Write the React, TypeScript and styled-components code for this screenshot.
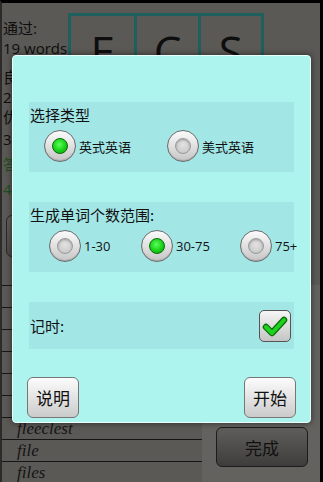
import React from "react";
import styled, { createGlobalStyle } from "styled-components";

const GlobalStyle = createGlobalStyle`
	html, body {
		margin: 0;
		padding: 0;
		background: #000;
	}
	body {
		font-family: "Open Sans", "Noto Sans CJK SC", sans-serif;
	}
`;

const Screen = styled.div`
	position: relative;
	width: 323px;
	height: 482px;
	box-sizing: border-box;
	border-top: 3px solid #000;
	border-right: 3px solid #000;
	border-left: 2px solid #2c2b29;
	background: #5a5955;
	overflow: hidden;
	display: flex;
	flex-direction: column;
	color: #0e0e0e;
`;

const Upper = styled.div`
	height: 282px;
	display: flex;
	flex-shrink: 0;
`;

const Stats = styled.div`
	width: 65px;
	display: flex;
	flex-direction: column;
	font-size: 15px;
	line-height: 20px;
	white-space: nowrap;
	padding-left: 1px;
`;

const StatLine = styled.div<{ $space: number; $green?: boolean }>`
	margin-top: ${(p) => p.$space}px;
	color: ${(p) => (p.$green ? "#1f4f1f" : "#0e0e0e")};
`;

const GhostButton = styled.div`
	margin-top: 16px;
	margin-left: 3px;
	width: 110px;
	height: 42px;
	box-sizing: border-box;
	border: 1px solid #262624;
	border-radius: 6px;
	background: linear-gradient(#605f5b, #4c4b48);
`;

const LetterGrid = styled.div`
	margin-top: 10px;
	width: 196px;
	height: 76px;
	box-sizing: border-box;
	border: 3px solid #1d605d;
	display: grid;
	grid-template-columns: 1fr 1fr 1fr;
`;

const LetterCell = styled.div<{ $divider?: boolean }>`
	border-left: ${(p) => (p.$divider ? "3px solid #1d605d" : "none")};
	font-size: 44px;
	line-height: 70px;
	text-align: center;
	color: #0e0e0e;
`;

const Lower = styled.div`
	flex: 1;
	display: flex;
	min-height: 0;
`;

const WordList = styled.div`
	width: 200px;
	border-top: 1px solid #161616;
	display: flex;
	flex-direction: column;
`;

const WordRow = styled.div`
	height: 21px;
	flex-shrink: 0;
	border-bottom: 1px solid #161616;
	padding-left: 15px;
	font-family: "Liberation Serif", serif;
	font-style: italic;
	font-size: 17px;
	line-height: 21px;
	color: #151515;
`;

const SidePanel = styled.div`
	flex: 1;
	background: #63625e;
	display: flex;
	align-items: flex-end;
	padding: 0 12px 15px 14px;
`;

const DoneButton = styled.div`
	width: 92px;
	height: 40px;
	box-sizing: border-box;
	border: 1px solid #1c1c1c;
	border-radius: 6px;
	background: linear-gradient(#5f5e5b, #3e3d3b);
	display: flex;
	align-items: center;
	justify-content: center;
	font-family: "Noto Sans CJK SC", sans-serif;
	font-size: 17px;
	color: #111;
`;

const Dialog = styled.div`
	position: absolute;
	left: 10px;
	top: 52px;
	width: 299px;
	height: 368px;
	box-sizing: border-box;
	background: #adf4ee;
	border: 1px solid #e6fffc;
	border-radius: 4px;
	box-shadow: 0 0 6px rgba(0, 0, 0, 0.55);
	padding: 46px 16px 4px;
	display: flex;
	flex-direction: column;
	font-family: "Noto Sans CJK SC", sans-serif;
`;

const Section = styled.div<{ $space: number }>`
	margin-top: ${(p) => p.$space}px;
	background: #a2e6e6;
	padding: 2px 0 10px 1px;
`;

const SectionTitle = styled.div`
	font-size: 15px;
	line-height: 22px;
	color: #111;
`;

const RadioRow = styled.div<{ $cols: string; $indent: number }>`
	margin-top: 4px;
	padding-left: ${(p) => p.$indent}px;
	display: grid;
	grid-template-columns: ${(p) => p.$cols};
`;

const RadioItem = styled.div`
	display: flex;
	align-items: center;
	gap: 3px;
	font-family: "Open Sans", "Noto Sans CJK SC", sans-serif;
	font-size: 13px;
	color: #111;
	white-space: nowrap;
`;

const RadioOuter = styled.div`
	width: 32px;
	height: 32px;
	box-sizing: border-box;
	border-radius: 50%;
	border: 1px solid #6c6c6c;
	background: linear-gradient(#fbfbfb, #c6c6c6);
	box-shadow: inset 0 -1px 1px rgba(0, 0, 0, 0.15);
	display: flex;
	align-items: center;
	justify-content: center;
	flex-shrink: 0;
`;

const RadioDot = styled.div<{ $on: boolean }>`
	width: 16px;
	height: 16px;
	box-sizing: border-box;
	border-radius: 50%;
	border: 1px solid ${(p) => (p.$on ? "#0b6a0b" : "#9a9a9a")};
	background: ${(p) =>
		p.$on
			? "radial-gradient(circle at 45% 40%, #5bff5b, #18d018 55%, #0a9a0a)"
			: "radial-gradient(circle at 50% 40%, #e2e2e2, #c4c4c4)"};
	box-shadow: ${(p) => (p.$on ? "none" : "inset 0 1px 2px rgba(0,0,0,0.25)")};
`;

const TimerSection = styled(Section)`
	height: 47px;
	box-sizing: border-box;
	padding: 0 3px 0 1px;
	display: flex;
	align-items: center;
	justify-content: space-between;
`;

const CheckBox = styled.div`
	width: 32px;
	height: 32px;
	box-sizing: border-box;
	border: 1px solid #555;
	border-radius: 5px;
	background: linear-gradient(#f6f6f6, #c4c4c4);
	display: flex;
	align-items: center;
	justify-content: center;
`;

const ButtonBar = styled.div`
	margin: 28px -2px 0;
	display: flex;
	justify-content: space-between;
`;

const DialogButton = styled.div`
	width: 52px;
	height: 41px;
	box-sizing: border-box;
	border: 1px solid #767676;
	border-radius: 6px;
	background: linear-gradient(#fcfcfc, #cbcbcb);
	display: flex;
	align-items: center;
	justify-content: center;
	font-size: 17px;
	color: #111;
`;

const Radio = ({ label, on }: { label: string; on: boolean }) => (
	<RadioItem>
		<RadioOuter>
			<RadioDot $on={on} />
		</RadioOuter>
		{label}
	</RadioItem>
);

// rows above "fleeclest" sit fully under the dialog, so they carry no text
const words = ["", "", "", "", "", "", "fleeclest", "file", "files"];

export default function App() {
	return (
		<>
			<GlobalStyle />
			<Screen>
				<Upper>
					<Stats>
						<StatLine $space={15}>通过:</StatLine>
						<StatLine $space={0}>19 words</StatLine>
						<StatLine $space={9}>良好:</StatLine>
						<StatLine $space={0}>2</StatLine>
						<StatLine $space={0}>优秀:</StatLine>
						<StatLine $space={2}>3</StatLine>
						<StatLine $space={5} $green>
							答对:
						</StatLine>
						<StatLine $space={5} $green>
							4
						</StatLine>
						<GhostButton />
					</Stats>
					<LetterGrid>
						<LetterCell>E</LetterCell>
						<LetterCell $divider>C</LetterCell>
						<LetterCell $divider>S</LetterCell>
					</LetterGrid>
				</Upper>
				<Lower>
					<WordList>
						{words.map((w, i) => (
							<WordRow key={i}>{w}</WordRow>
						))}
					</WordList>
					<SidePanel>
						<DoneButton>完成</DoneButton>
					</SidePanel>
				</Lower>

				<Dialog>
					<Section $space={0}>
						<SectionTitle>选择类型</SectionTitle>
						<RadioRow $cols="123px auto" $indent={14}>
							<Radio label="英式英语" on />
							<Radio label="美式英语" on={false} />
						</RadioRow>
					</Section>
					<Section $space={30}>
						<SectionTitle>生成单词个数范围:</SectionTitle>
						<RadioRow $cols="92px 99px auto" $indent={19}>
							<Radio label="1-30" on={false} />
							<Radio label="30-75" on />
							<Radio label="75+" on={false} />
						</RadioRow>
					</Section>
					<TimerSection $space={30}>
						<SectionTitle>记时:</SectionTitle>
						<CheckBox>
							<svg width="26" height="22" viewBox="0 0 26 22">
								<path d="M4 12 L10 18 L22 5" fill="none" stroke="#0a6e0a" strokeWidth="6.5" strokeLinecap="round" strokeLinejoin="round" />
								<path d="M4 12 L10 18 L22 5" fill="none" stroke="#1fd21f" strokeWidth="4" strokeLinecap="round" strokeLinejoin="round" />
							</svg>
						</CheckBox>
					</TimerSection>
					<ButtonBar>
						<DialogButton>说明</DialogButton>
						<DialogButton>开始</DialogButton>
					</ButtonBar>
				</Dialog>
			</Screen>
		</>
	);
}
